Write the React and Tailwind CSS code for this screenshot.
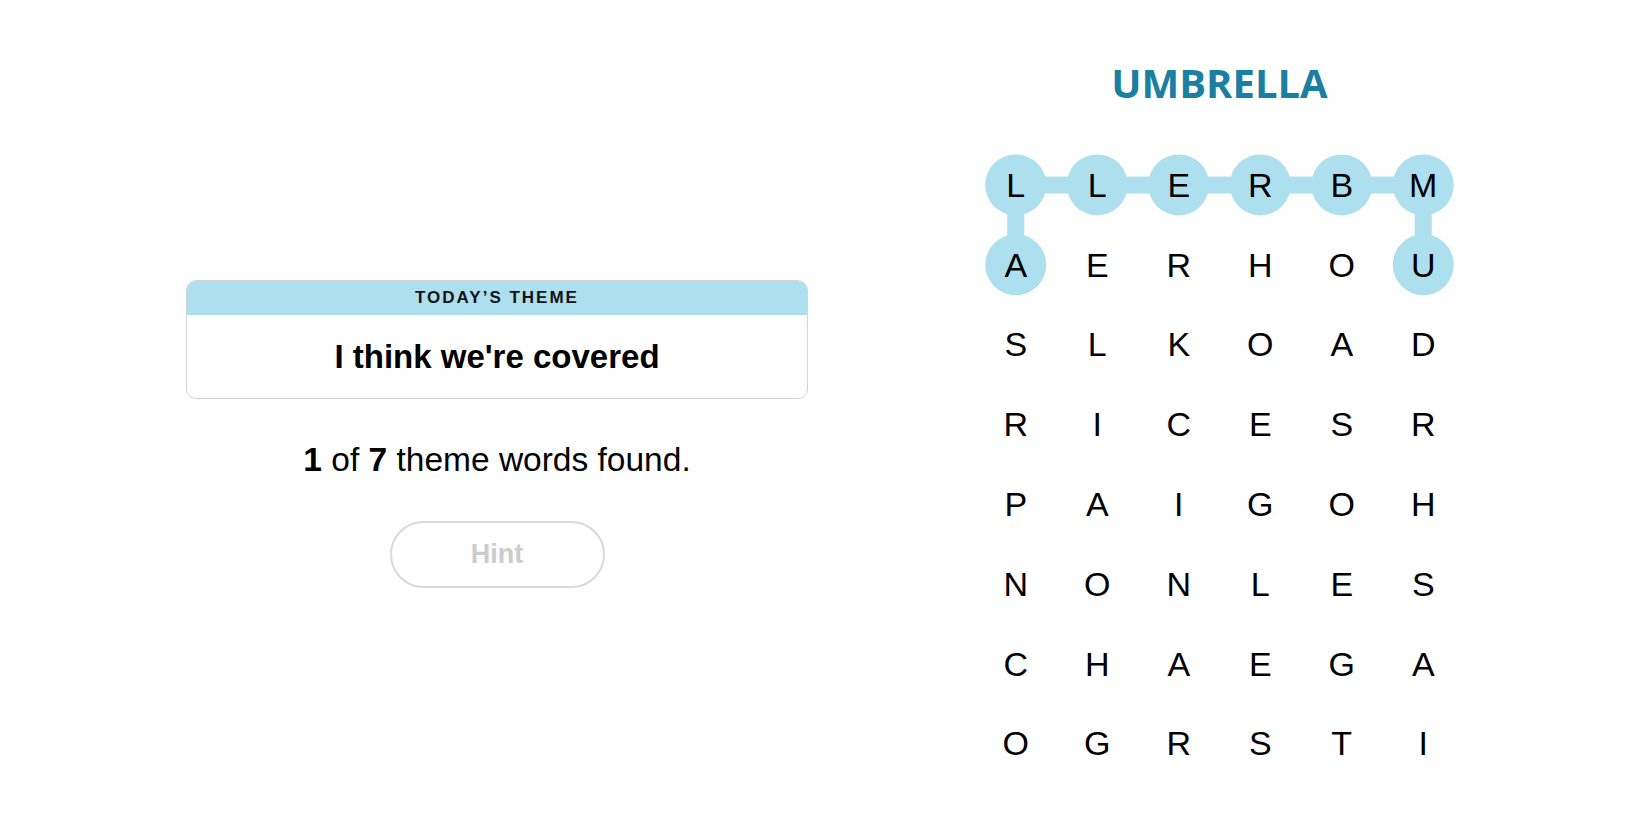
import React from 'react'

const ROWS = [
  'LLERBM',
  'AERHOU',
  'SLKOAD',
  'RICESR',
  'PAIGOH',
  'NONLES',
  'CHAEGA',
  'OGRSTI',
]

const CELL_W = 81.5
const CELL_H = 79.8
const HILITE = '#aedfee'

// found word: UMBRELLA, as [col, row]
const PATH = [[5, 1], [5, 0], [4, 0], [3, 0], [2, 0], [1, 0], [0, 0], [0, 1]]

function PathOverlay() {
  const pts = PATH.map(([c, r]) => [CELL_W / 2 + c * CELL_W, CELL_H / 2 + r * CELL_H])
  return (
    <svg className="absolute inset-0 pointer-events-none" width={CELL_W * 6} height={CELL_H * 8}>
      <polyline
        points={pts.map(p => p.join(',')).join(' ')}
        fill="none" stroke={HILITE} strokeWidth="17" strokeLinejoin="round" />
      {pts.map(([x, y], i) => (
        <circle key={i} cx={x} cy={y} r="30.5" fill={HILITE} />
      ))}
    </svg>
  )
}

function Board() {
  return (
    <div className="relative w-[489px]">
      <PathOverlay />
      <div className="relative grid grid-cols-6">
        {ROWS.map((row, r) =>
          row.split('').map((ch, c) => (
            <div key={r + '-' + c}
              className="h-[79.8px] flex items-center justify-center text-[34px] leading-none text-black"
              style={{ fontFamily: '"Liberation Sans", Arial, sans-serif' }}>
              {ch}
            </div>
          ))
        )}
      </div>
    </div>
  )
}

export default function App() {
  return (
    <div className="min-h-screen w-full bg-white flex justify-center gap-[167px]"
      style={{ fontFamily: '"Liberation Sans", Arial, sans-serif' }}>
      {/* left: theme + progress */}
      <div className="w-[622px] pt-[280px] flex flex-col items-center">
        <div className="w-full rounded-[10px] border border-[#d3d3d3] overflow-hidden">
          <div className="h-[34px] bg-[#aedfee] flex items-center justify-center text-[17px] font-bold tracking-[2px] text-[#121212]">
            TODAY’S THEME
          </div>
          <div className="h-[83px] flex items-center justify-center text-[33px] font-bold text-black">
            I think we're covered
          </div>
        </div>
        <p className="mt-[41px] text-[33.5px] leading-[40px] text-black">
          <b>1</b> of <b>7</b> theme words found.
        </p>
        <button
          className="mt-[41px] w-[215px] h-[67px] rounded-full border-2 border-[#d9d9d9] text-[27px] font-bold text-[#cccccc] bg-white">
          Hint
        </button>
      </div>

      {/* right: board */}
      <div className="w-[489px] pt-[59px] flex flex-col items-center">
        <h1 className="text-[40px] leading-[48px] font-bold text-[#1b7fa1]"
          style={{ fontFamily: '"Open Sans", "Noto Sans", sans-serif' }}>
          UMBRELLA
        </h1>
        <div className="mt-[38px]">
          <Board />
        </div>
      </div>
    </div>
  )
}
